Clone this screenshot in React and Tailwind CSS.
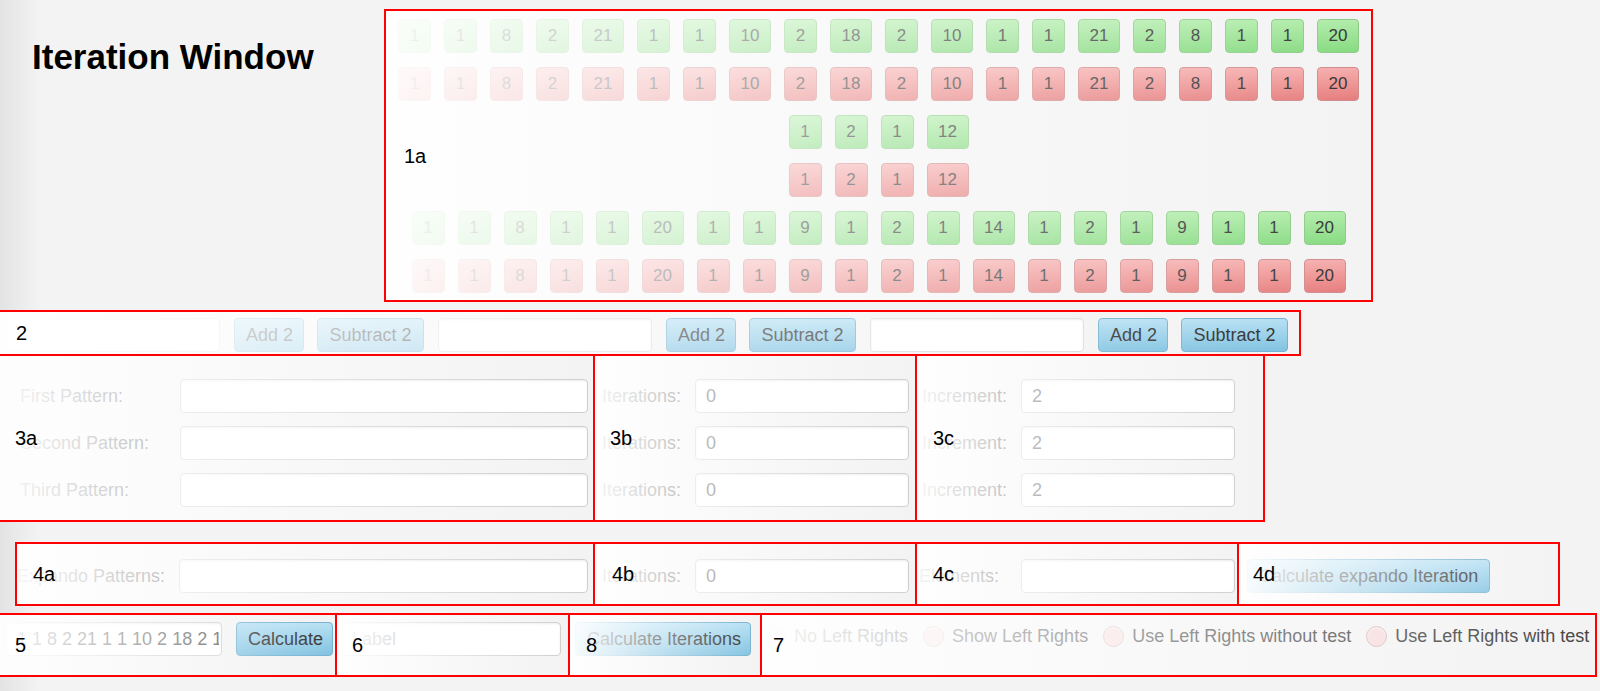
// Iteration Window — annotated layout sketch
const topRow = [1, 1, 8, 2, 21, 1, 1, 10, 2, 18, 2, 10, 1, 1, 21, 2, 8, 1, 1, 20];
const midRow = [1, 2, 1, 12];
const lowRow = [1, 1, 8, 1, 1, 20, 1, 1, 9, 1, 2, 1, 14, 1, 2, 1, 9, 1, 1, 20];

const inputCls =
  "h-[34px] rounded-[4px] border border-[#cfcfcf] bg-white px-[10px] text-[18px] text-[#555] outline-none shadow-[inset_0_1px_2px_rgba(0,0,0,0.08)] placeholder:text-[#9a9a9a]";
const btnCls =
  "h-[34px] shrink-0 rounded-[4px] border border-[#74b1d0] bg-linear-to-b from-[#b6e0f3] to-[#80c2e1] px-[11px] text-[18px] text-[#333] whitespace-nowrap";

function Tile({ n, red }) {
  return (
    <div
      className={`flex h-[34px] items-center justify-center rounded-[4px] border text-[17px] text-[#333] ${
        n > 9 ? "w-[42px]" : "w-[33px]"
      } ${
        red
          ? "border-[#cf8a8a] bg-linear-to-b from-[#f5acac] to-[#e67b7b]"
          : "border-[#8bca85] bg-linear-to-b from-[#b0eca9] to-[#85da7f]"
      }`}
    >
      {n}
    </div>
  );
}

function TileRow({ items, red }) {
  return (
    <div className="flex justify-center gap-[13px]">
      {items.map((n, i) => (
        <Tile key={i} n={n} red={red} />
      ))}
    </div>
  );
}

// red annotation box, white fade from the left, black tag on top
function Box({ tag, tagLeft = "left-[16px]", className = "", children }) {
  return (
    <div className={`relative shrink-0 border-2 border-[#ff0000] ${className}`}>
      {children}
      <div className="pointer-events-none absolute inset-0 bg-linear-to-r from-white/95 via-white/45 to-white/0" />
      <span
        className={`absolute top-1/2 z-10 -translate-y-1/2 text-[20px] leading-none text-black ${tagLeft}`}
      >
        {tag}
      </span>
    </div>
  );
}

function Field({ label, value, labelCls = "", inputW }) {
  return (
    <div className="flex items-center">
      <span className={`text-[18px] text-[#444] whitespace-nowrap ${labelCls}`}>{label}</span>
      <input readOnly defaultValue={value} className={`${inputCls} ${inputW}`} />
    </div>
  );
}

function Radio({ label }) {
  return (
    <div className="flex items-center gap-[8px]">
      <span className="h-[21px] w-[21px] rounded-full border border-[#d6b9b9] bg-[#f6dcdc] shadow-[inset_0_1px_1px_rgba(255,255,255,0.8)]" />
      <span className="text-[18px] text-[#444] whitespace-nowrap">{label}</span>
    </div>
  );
}

function AddGroup() {
  return (
    <div className="flex items-center">
      <input readOnly className={`${inputCls} w-[214px] border-[#dcdcdc]`} />
      <button className={`${btnCls} ml-[14px] w-[70px]`}>Add 2</button>
      <button className={`${btnCls} ml-[13px] w-[107px]`}>Subtract 2</button>
    </div>
  );
}

export default function App() {
  return (
    <div className="min-h-screen w-full overflow-hidden bg-[linear-gradient(to_right,#e3e3e3_0px,#f3f3f3_40px,#f3f3f3_100%)] font-['Liberation_Sans',Arial,sans-serif]">
      {/* top: title + tiles */}
      <div className="flex">
        <div className="w-[384px] shrink-0 pl-[32px] pt-[39px]">
          <h1 className="text-[35px] font-bold leading-none text-black">Iteration Window</h1>
        </div>
        <Box tag="1a" tagLeft="left-[18px]" className="mt-[9px] h-[293px] w-[989px]">
          <div className="flex flex-col gap-[14px] pt-[8px]">
            <TileRow items={topRow} />
            <TileRow items={topRow} red />
            <TileRow items={midRow} />
            <TileRow items={midRow} red />
            <TileRow items={lowRow} />
            <TileRow items={lowRow} red />
          </div>
        </Box>
      </div>

      {/* 2 */}
      <div className="mt-[8px] flex">
        <Box tag="2" className="-ml-[2px]">
          <div className="flex gap-[14px] pb-[2px] pl-[6px] pr-[11px] pt-[6px]">
            <AddGroup />
            <AddGroup />
            <AddGroup />
          </div>
        </Box>
      </div>

      {/* 3 */}
      <div className="-mt-[2px] flex">
        <Box tag="3a" tagLeft="left-[15px]" className="-ml-[2px] h-[168px] w-[597px]">
          <div className="flex flex-col gap-[13px] pl-[20px] pt-[23px]">
            <Field label="First Pattern:" labelCls="w-[160px]" inputW="w-[408px]" />
            <Field label="Second Pattern:" labelCls="w-[160px]" inputW="w-[408px]" />
            <Field label="Third Pattern:" labelCls="w-[160px]" inputW="w-[408px]" />
          </div>
        </Box>
        <Box tag="3b" tagLeft="left-[15px]" className="-ml-[2px] h-[168px] w-[324px]">
          <div className="flex flex-col items-end gap-[13px] pr-[6px] pt-[23px]">
            <Field label="Iterations:" value="0" labelCls="mr-[14px]" inputW="w-[214px]" />
            <Field label="Iterations:" value="0" labelCls="mr-[14px]" inputW="w-[214px]" />
            <Field label="Iterations:" value="0" labelCls="mr-[14px]" inputW="w-[214px]" />
          </div>
        </Box>
        <Box tag="3c" className="-ml-[2px] h-[168px] w-[350px]">
          <div className="flex flex-col items-end gap-[13px] pr-[28px] pt-[23px]">
            <Field label="Increment:" value="2" labelCls="mr-[14px]" inputW="w-[214px]" />
            <Field label="Increment:" value="2" labelCls="mr-[14px]" inputW="w-[214px]" />
            <Field label="Increment:" value="2" labelCls="mr-[14px]" inputW="w-[214px]" />
          </div>
        </Box>
      </div>

      {/* 4 */}
      <div className="mt-[20px] flex pl-[15px]">
        <Box tag="4a" className="h-[64px] w-[580px]">
          <div className="pt-[15px]">
            <Field label="Expando Patterns:" labelCls="w-[162px]" inputW="w-[409px]" />
          </div>
        </Box>
        <Box tag="4b" tagLeft="left-[17px]" className="-ml-[2px] h-[64px] w-[324px]">
          <div className="flex justify-end pr-[6px] pt-[15px]">
            <Field label="Iterations:" value="0" labelCls="mr-[14px]" inputW="w-[214px]" />
          </div>
        </Box>
        <Box tag="4c" className="-ml-[2px] h-[64px] w-[324px]">
          <div className="flex justify-end pr-[2px] pt-[15px]">
            <Field label="Elements:" labelCls="mr-[22px]" inputW="w-[214px]" />
          </div>
        </Box>
        <Box tag="4d" tagLeft="left-[14px]" className="-ml-[2px] h-[64px] w-[323px]">
          <div className="pl-[8px] pt-[15px]">
            <button className={btnCls}>Calculate expando Iteration</button>
          </div>
        </Box>
      </div>

      {/* 5 / 6 / 8 / 7 */}
      <div className="mt-[7px] flex">
        <Box tag="5" tagLeft="left-[15px]" className="-ml-[2px] h-[64px] w-[339px]">
          <div className="flex gap-[14px] pl-[6px] pt-[7px]">
            <input
              readOnly
              defaultValue="1 1 8 2 21 1 1 10 2 18 2 10 1 1 21 2 8 1 1 20"
              className={`${inputCls} w-[216px] pr-[2px]`}
            />
            <button className={`${btnCls} w-[97px]`}>Calculate</button>
          </div>
        </Box>
        <Box tag="6" tagLeft="left-[15px]" className="-ml-[2px] h-[64px] w-[235px]">
          <div className="pl-[4px] pt-[7px]">
            <input readOnly placeholder="Label" className={`${inputCls} w-[220px]`} />
          </div>
        </Box>
        <Box tag="8" className="-ml-[2px] h-[64px] w-[194px]">
          <div className="pl-[5px] pt-[7px]">
            <button className={`${btnCls} w-[176px]`}>Calculate Iterations</button>
          </div>
        </Box>
        <Box tag="7" tagLeft="left-[11px]" className="-ml-[2px] h-[64px] w-[837px]">
          <div className="flex gap-[15px] pl-[3px] pt-[8px]">
            <Radio label="No Left Rights" />
            <Radio label="Show Left Rights" />
            <Radio label="Use Left Rights without test" />
            <Radio label="Use Left Rights with test" />
          </div>
        </Box>
      </div>
    </div>
  );
}
